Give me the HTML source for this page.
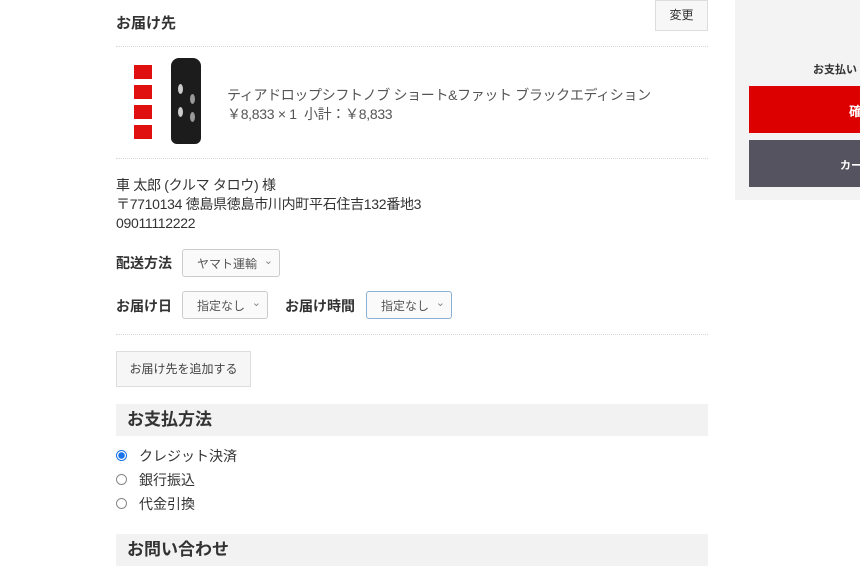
<!DOCTYPE html>
<html><head><meta charset="utf-8"><style>
body{margin:0;width:860px;height:573px;overflow:hidden;background:#fff;font-family:"Liberation Sans","Noto Sans CJK JP",sans-serif;color:#333;position:relative}
.a{position:absolute;white-space:nowrap}
.b{font-weight:bold}
.line{position:absolute;left:116px;width:592px;border-top:1px dotted #d8d8d8}
.sel{position:absolute;height:26px;border:1px solid #ccc;border-radius:3px;background:#fafafa;font-size:12px;color:#555;line-height:26px;padding-left:14px;box-sizing:border-box}
.sel:after{content:"⌄";position:absolute;right:6px;top:-3px;font-size:11px;color:#888}
.bar{position:absolute;left:116px;width:592px;height:32px;background:#f2f2f2;font-weight:bold;font-size:17px;line-height:32px;padding-left:11px;box-sizing:border-box;color:#333}
.rad{position:absolute;left:116px;width:9px;height:9px;border:1px solid #888;border-radius:50%}
</style></head><body>
<div class="a" style="left:735px;top:0;width:125px;height:200px;background:#f3f3f3"></div>
<div class="a b" style="left:813px;top:61px;font-size:11px">お支払い</div>
<div class="a" style="left:749px;top:86px;width:111px;height:47px;background:#dd0000"></div>
<div class="a b" style="left:849px;top:101px;font-size:13px;color:#fff">確</div>
<div class="a" style="left:749px;top:140px;width:111px;height:47px;background:#54535f"></div>
<div class="a b" style="left:840px;top:157px;font-size:11px;color:#fff">カー</div>

<div class="a b" style="left:116px;top:12px;font-size:15px">お届け先</div>
<div class="a" style="left:655px;top:0;width:53px;height:31px;border:1px solid #ddd;background:#f7f7f7;box-sizing:border-box;font-size:12px;text-align:center;line-height:28px">変更</div>
<div class="line" style="top:46px"></div>
<div class="a" style="left:134px;top:65px;width:18px;height:14px;background:#e01010"></div>
<div class="a" style="left:134px;top:85px;width:18px;height:14px;background:#e01010"></div>
<div class="a" style="left:134px;top:105px;width:18px;height:14px;background:#e01010"></div>
<div class="a" style="left:134px;top:125px;width:18px;height:14px;background:#e01010"></div>
<div class="a" style="left:171px;top:58px;width:30px;height:86px;background:#1c1c1c;border-radius:8px 8px 6px 6px"></div>
<div class="a" style="left:178px;top:84px;width:5px;height:10px;border-radius:50%;background:#ccc"></div>
<div class="a" style="left:178px;top:107px;width:5px;height:10px;border-radius:50%;background:#ccc"></div>
<div class="a" style="left:190px;top:94px;width:5px;height:10px;border-radius:50%;background:#999"></div>
<div class="a" style="left:190px;top:112px;width:5px;height:10px;border-radius:50%;background:#999"></div>
<div class="a" style="left:227px;top:85px;font-size:14px;color:#555;letter-spacing:-0.35px">ティアドロップシフトノブ ショート&amp;ファット ブラックエディション</div>
<div class="a" style="left:227px;top:104px;font-size:14px;color:#555;letter-spacing:-0.3px">￥8,833 × 1&nbsp; 小計：￥8,833</div>
<div class="line" style="top:158px"></div>
<div class="a" style="left:116px;top:176px;font-size:14px;line-height:19px;letter-spacing:-0.3px">車 太郎 (クルマ タロウ) 様<br>〒7710134 徳島県徳島市川内町平石住吉132番地3<br>09011112222</div>
<div class="a b" style="left:116px;top:253px;font-size:14px">配送方法</div>
<div class="sel" style="left:182px;top:249px;width:98px;height:28px;line-height:28px">ヤマト運輸</div>
<div class="a b" style="left:116px;top:296px;font-size:14px">お届け日</div>
<div class="sel" style="left:182px;top:291px;width:86px;height:28px;line-height:28px">指定なし</div>
<div class="a b" style="left:285px;top:296px;font-size:14px">お届け時間</div>
<div class="sel" style="left:366px;top:291px;width:86px;height:28px;line-height:28px;border-color:#8ab0d6">指定なし</div>
<div class="line" style="top:334px"></div>
<div class="a" style="left:116px;top:351px;width:135px;height:36px;border:1px solid #ddd;background:#f6f6f6;box-sizing:border-box;font-size:12px;text-align:center;line-height:34px;color:#444">お届け先を追加する</div>
<div class="bar" style="top:404px">お支払方法</div>
<div class="rad" style="top:450px;border-color:#1a73e8;background:radial-gradient(circle,#1a73e8 3px,#fff 3.5px)"></div>
<div class="a" style="left:139px;top:446px;font-size:14px">クレジット決済</div>
<div class="rad" style="top:474px"></div>
<div class="a" style="left:139px;top:470px;font-size:14px">銀行振込</div>
<div class="rad" style="top:498px"></div>
<div class="a" style="left:139px;top:494px;font-size:14px">代金引換</div>
<div class="bar" style="top:534px">お問い合わせ</div>
</body></html>
